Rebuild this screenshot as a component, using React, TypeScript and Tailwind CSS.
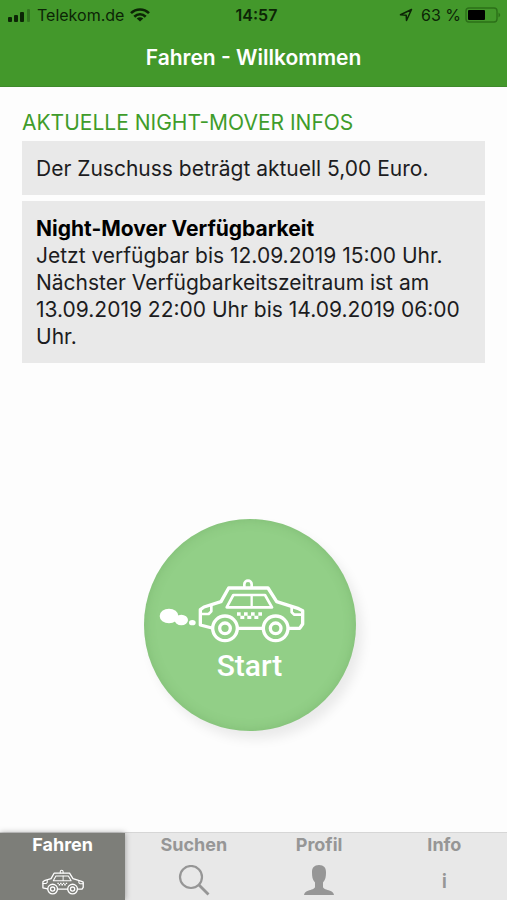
import type { ReactNode } from 'react';
import { clsx } from 'clsx';

interface Tab {
  id: string;
  label: string;
  icon: ReactNode;
}

function TaxiShape() {
  return (
    <g fill="none" stroke="currentColor" strokeWidth="10" strokeLinejoin="round" strokeLinecap="round">
      {/* Body */}
      <path d="M186 174L151 165V119L162 111L213 95L236 54H354L380 95L446 116L458 122V162L449 175H416" />
      <path d="M265 175H338" />
      {/* Roof light */}
      <path d="M283 52V43a11 11 0 0 1 22 0V52" strokeWidth="8" />
      {/* Windows */}
      <path d="M250 75H345L366 112H230Z" strokeWidth="8" />
      <path d="M305 76V111" strokeWidth="7" />
      {/* Lights */}
      <path d="M152 132H176L184 124V108" strokeWidth="8" />
      <path d="M425 112V127L433 134H457" strokeWidth="8" />
      {/* Wheels */}
      <circle cx="225" cy="175" r="37" />
      <circle cx="225" cy="175" r="16" />
      <circle cx="377" cy="175" r="37" />
      <circle cx="377" cy="175" r="16" />
      {/* Checker stripe */}
      <path
        d="M261 127h11v10h-11zM282 127h11v10h-11zM303 127h11v10h-11zM325 127h11v10h-11zM271 137h12v10h-12zM292 137h12v10h-12zM313 137h12v10h-12z"
        fill="currentColor"
        stroke="none"
      />
    </g>
  );
}

function StartTaxi() {
  return (
    <svg viewBox="27 24 441 198" className="h-[66px] w-[147px]" aria-hidden="true">
      <g fill="currentColor">
        <ellipse cx="57" cy="138" rx="28" ry="22" />
        <ellipse cx="94" cy="150" rx="20" ry="16" />
        <ellipse cx="127" cy="158" rx="10" ry="8" />
      </g>
      <TaxiShape />
    </svg>
  );
}

function SignalIcon() {
  return (
    <svg viewBox="0 0 23 13" className="h-[13px] w-[23px]" fill="currentColor" aria-hidden="true">
      <rect x="0" y="8" width="4" height="5" rx="1" />
      <rect x="6" y="6" width="4" height="7" rx="1" />
      <rect x="12" y="3" width="4" height="10" rx="1" />
      <rect x="19" y="0" width="3" height="13" rx="1" opacity="0.3" />
    </svg>
  );
}

function WifiIcon() {
  return (
    <svg viewBox="0 0 20 14" className="h-3.5 w-5" fill="none" stroke="currentColor" strokeWidth="2.6" aria-hidden="true">
      <path d="M1 5.2C6 0.2 14 0.2 19 5.2" />
      <path d="M4.3 8.7C7.6 5.5 12.4 5.5 15.7 8.7" />
      <path d="M10 13.6L6.7 10.6Q10 8 13.3 10.6Z" fill="currentColor" stroke="none" />
    </svg>
  );
}

function LocationIcon() {
  return (
    <svg viewBox="0 0 14 14" className="h-3.5 w-3.5" fill="none" stroke="currentColor" strokeWidth="1.5" strokeLinejoin="round" aria-hidden="true">
      <path d="M12.5 1.5L1.5 6.8L7.2 7.2L7.5 12.5Z" />
    </svg>
  );
}

function BatteryIcon() {
  return (
    <svg viewBox="0 0 36 16" className="h-4 w-9" aria-hidden="true">
      <rect x="1" y="1" width="31" height="14" rx="3" fill="none" stroke="#2c7019" strokeWidth="1.4" />
      <rect x="3" y="3" width="17" height="10" rx="1" fill="#000" />
      <path d="M33.5 5.5Q37 8 33.5 10.5Z" fill="#2c7019" />
    </svg>
  );
}

const tabs: Tab[] = [
  {
    id: 'fahren',
    label: 'Fahren',
    icon: (
      <svg viewBox="144 24 320 194" className="mt-1 h-[26px] w-[42px]" aria-hidden="true">
        <TaxiShape />
      </svg>
    ),
  },
  {
    id: 'suchen',
    label: 'Suchen',
    icon: (
      <svg viewBox="0 0 32 32" className="size-8" fill="none" stroke="currentColor" strokeWidth="2.2" aria-hidden="true">
        <circle cx="13" cy="12" r="11" />
        <path d="M21 20L30.5 29.5" strokeWidth="2.8" />
      </svg>
    ),
  },
  {
    id: 'profil',
    label: 'Profil',
    icon: (
      <svg viewBox="0 0 32 32" className="size-8" fill="currentColor" aria-hidden="true">
        <path d="M16 0C11.2 0 8.8 2.8 9 7.5C9 11.4 9.4 14.8 12 17.5V22C11.5 24 8.5 24.5 5 25.7C2.5 26.6 1.2 28 1 30H31C30.8 28 29.5 26.6 27 25.7C23.5 24.5 20.5 24 20 22V17.5C22.6 14.8 23 11.4 23 7.5C23.2 2.8 20.8 0 16 0Z" />
      </svg>
    ),
  },
  {
    id: 'info',
    label: 'Info',
    icon: <span className="text-xl leading-8 font-semibold">i</span>,
  },
];

const activeTab = 'fahren';

export default function App() {
  return (
    <div className="flex min-h-screen flex-col bg-[#fdfdfd] font-['Inter','Liberation_Sans',sans-serif] text-[#1c1c1e]">
      <header className="border-b border-[#3f8a2c] bg-[#43982b]">
        <div className="grid h-[30px] grid-cols-[1fr_auto_1fr] items-center pr-1.5 pl-2 text-base text-[#0c2506]">
          <div className="flex items-center gap-1.5">
            <SignalIcon />
            <span>Telekom.de</span>
            <WifiIcon />
          </div>
          <span className="pl-1 font-semibold">14:57</span>
          <div className="flex items-center justify-end gap-1">
            <LocationIcon />
            <span className="pl-1">63 %</span>
            <BatteryIcon />
          </div>
        </div>
        <h1 className="h-14 text-center text-[21px] leading-[56px] font-semibold text-white">Fahren - Willkommen</h1>
      </header>

      <main className="flex flex-1 flex-col">
        <section className="px-[22px] pt-[22px]">
          <h2 className="text-[21px] leading-7 text-[#3f9c2b]">AKTUELLE NIGHT-MOVER INFOS</h2>
          <div className="mt-1 flex flex-col gap-1.5 text-[21px] leading-[27px]">
            <p className="bg-[#e9e9e9] px-3.5 pt-3.5 pb-[13px]">Der Zuschuss beträgt aktuell 5,00 Euro.</p>
            <div className="bg-[#e9e9e9] px-3.5 pt-3.5 pb-[13px]">
              <h3 className="font-bold text-black">Night-Mover Verfügbarkeit</h3>
              <p>Jetzt verfügbar bis 12.09.2019 15:00 Uhr.</p>
              <p>Nächster Verfügbarkeitszeitraum ist am 13.09.2019 22:00 Uhr bis 14.09.2019 06:00 Uhr.</p>
            </div>
          </div>
        </section>

        <div className="flex flex-1 items-center justify-center pt-[54px] pr-2">
          <button
            type="button"
            className="flex size-[212px] flex-col items-center rounded-full bg-[#92cf87] pt-[59px] text-white shadow-[6px_8px_12px_rgba(0,0,0,0.08),inset_0_0_12px_rgba(70,130,60,0.25)]"
          >
            <span className="pr-[34px]">
              <StartTaxi />
            </span>
            <span className="mt-1 font-['Roboto',sans-serif] text-[30px] leading-9 font-medium">Start</span>
          </button>
        </div>
      </main>

      <nav className="flex h-[68px] border-t border-[#d6d6d6] bg-[#e8e8e8]">
        {tabs.map((tab) => (
          <button
            key={tab.id}
            type="button"
            aria-current={tab.id === activeTab ? 'page' : undefined}
            className={clsx(
              'flex flex-1 flex-col items-center text-lg leading-6 font-bold',
              tab.id === activeTab
                ? 'mr-1.5 bg-[#7d7e79] text-white shadow-[0_0_6px_rgba(0,0,0,0.35)]'
                : 'text-[#969696]'
            )}
          >
            <span className="mb-2">{tab.label}</span>
            {tab.icon}
          </button>
        ))}
      </nav>
    </div>
  );
}
